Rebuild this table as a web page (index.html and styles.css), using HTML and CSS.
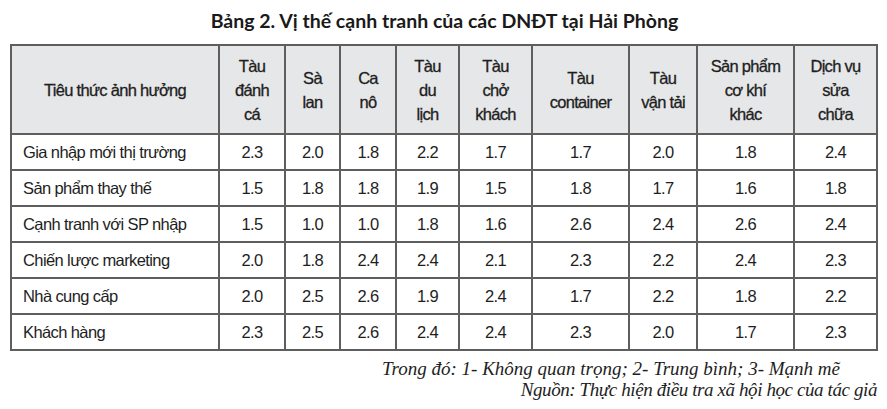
FILE: index.html
```html
<!DOCTYPE html>
<html lang="vi">
<head>
<meta charset="utf-8">
<title>Bảng 2</title>
<link rel="stylesheet" href="styles.css">
</head>
<body>
<div class="page">
  <h1 class="title">Bảng 2. Vị thế cạnh tranh của các DNĐT tại Hải Phòng</h1>
  <table class="grid">
    <colgroup>
      <col class="c1"><col class="c2"><col class="c3"><col class="c4"><col class="c5">
      <col class="c6"><col class="c7"><col class="c8"><col class="c9"><col class="c10">
    </colgroup>
    <thead>
      <tr>
        <th>Tiêu thức ảnh hưởng</th>
        <th>Tàu<br>đánh<br>cá</th>
        <th>Sà<br>lan</th>
        <th>Ca<br>nô</th>
        <th>Tàu<br>du<br>lịch</th>
        <th>Tàu<br>chở<br>khách</th>
        <th>Tàu<br>container</th>
        <th>Tàu<br>vận tải</th>
        <th>Sản phẩm<br>cơ khí<br>khác</th>
        <th>Dịch vụ<br>sửa<br>chữa</th>
      </tr>
    </thead>
    <tbody>
      <tr><td class="label">Gia nhập mới thị trường</td><td>2.3</td><td>2.0</td><td>1.8</td><td>2.2</td><td>1.7</td><td>1.7</td><td>2.0</td><td>1.8</td><td>2.4</td></tr>
      <tr><td class="label">Sản phẩm thay thế</td><td>1.5</td><td>1.8</td><td>1.8</td><td>1.9</td><td>1.5</td><td>1.8</td><td>1.7</td><td>1.6</td><td>1.8</td></tr>
      <tr><td class="label">Cạnh tranh với SP nhập</td><td>1.5</td><td>1.0</td><td>1.0</td><td>1.8</td><td>1.6</td><td>2.6</td><td>2.4</td><td>2.6</td><td>2.4</td></tr>
      <tr><td class="label">Chiến lược marketing</td><td>2.0</td><td>1.8</td><td>2.4</td><td>2.4</td><td>2.1</td><td>2.3</td><td>2.2</td><td>2.4</td><td>2.3</td></tr>
      <tr><td class="label">Nhà cung cấp</td><td>2.0</td><td>2.5</td><td>2.6</td><td>1.9</td><td>2.4</td><td>1.7</td><td>2.2</td><td>1.8</td><td>2.2</td></tr>
      <tr><td class="label">Khách hàng</td><td>2.3</td><td>2.5</td><td>2.6</td><td>2.4</td><td>2.4</td><td>2.3</td><td>2.0</td><td>1.7</td><td>2.3</td></tr>
    </tbody>
  </table>
  <div class="notes">
    <p class="note note-legend">Trong đó: 1- Không quan trọng; 2- Trung bình; 3- Mạnh mẽ</p>
    <p class="note note-source">Nguồn: Thực hiện điều tra xã hội học của tác giả</p>
  </div>
</div>
</body>
</html>
```

FILE: styles.css
```css
html, body {
  margin: 0;
  padding: 0;
  background: #ffffff;
}

.page {
  width: 887px;
  height: 409px;
  overflow: hidden;
  color: #1e1e1e;
  font-family: "Liberation Sans", Arial, sans-serif;
}

.title {
  margin: 0;
  padding: 7px 0 0 0;
  height: 44px;
  box-sizing: border-box;
  text-align: center;
  font-family: Lato, "Open Sans", sans-serif;
  font-weight: 700;
  font-size: 19.5px;
  line-height: 28px;
  color: #1a1a1a;
  padding-left: 2px;
}

.grid {
  margin-left: 10px;
  width: 868px;
  table-layout: fixed;
  border-collapse: collapse;
  border: 2px solid #5e5e5e;
}

.c1 { width: 208px; }
.c2 { width: 66px; }
.c3 { width: 55px; }
.c4 { width: 56px; }
.c5 { width: 63px; }
.c6 { width: 73px; }
.c7 { width: 97px; }
.c8 { width: 68px; }
.c9 { width: 97px; }
.c10 { width: 83px; }

.grid th,
.grid td {
  border: 2px solid #5e5e5e;
  padding: 0;
  text-align: center;
  vertical-align: middle;
}

.grid th {
  background: #e6e7e8;
  font-weight: 400;
  font-size: 16.5px;
  height: 87px;
  line-height: 24px;
  letter-spacing: -0.7px;
  -webkit-text-stroke: 0.3px #1e1e1e;
}

.grid td {
  height: 34px;
  font-size: 16.5px;
  line-height: 20px;
  letter-spacing: -0.6px;
}

.grid td.label {
  text-align: left;
  padding-left: 11px;
}

.notes {
  padding-top: 7px;
}

.note {
  margin: 0;
  font-family: "Liberation Serif", "Times New Roman", serif;
  font-style: italic;
  font-size: 19px;
  line-height: 21px;
  text-align: right;
  color: #1e1e1e;
}

.note-legend {
  padding-right: 47px;
}

.note-source {
  padding-right: 10px;
  letter-spacing: -0.4px;
}
```
